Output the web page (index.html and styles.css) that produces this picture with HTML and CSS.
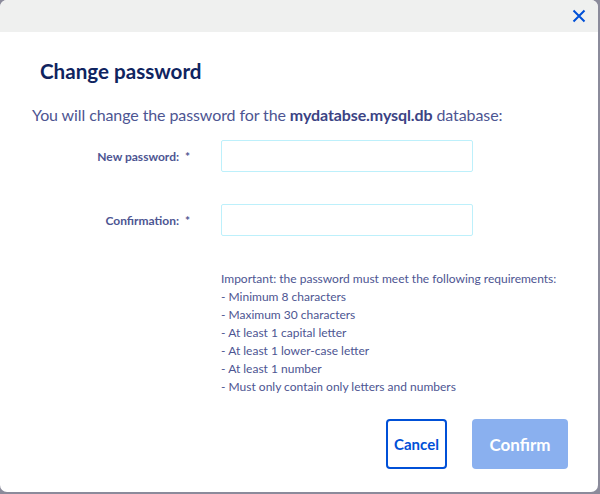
FILE: index.html
```html
<!DOCTYPE html>
<html>
<head>
<meta charset="utf-8">
<link rel="stylesheet" href="styles.css">
</head>
<body>
<div class="modal">
  <div class="header">
    <button class="close" aria-label="Close">
      <svg width="14" height="14" viewBox="0 0 14 14"><path d="M1.5 1.5L12.5 12.5M12.5 1.5L1.5 12.5" stroke="#0050d7" stroke-width="2" fill="none"/></svg>
    </button>
  </div>
  <div class="body">
    <h1 class="title">Change password</h1>
    <p class="intro">You will change the password for the <b>mydatabse.mysql.db</b> database:</p>
    <div class="form">
      <label class="label">New password:&nbsp; *</label>
      <input class="input" type="password">
      <label class="label">Confirmation:&nbsp; *</label>
      <input class="input" type="password">
      <div></div>
      <div class="req">
        <div>Important: the password must meet the following requirements:</div>
        <div>- Minimum 8 characters</div>
        <div>- Maximum 30 characters</div>
        <div>- At least 1 capital letter</div>
        <div>- At least 1 lower-case letter</div>
        <div>- At least 1 number</div>
        <div>- Must only contain only letters and numbers</div>
      </div>
    </div>
    <div class="actions">
      <button class="btn cancel">Cancel</button>
      <button class="btn confirm">Confirm</button>
    </div>
  </div>
</div>
</body>
</html>
```
FILE: styles.css
```css
html, body {
  margin: 0;
  padding: 0;
  background: #8b8b9b;
  width: 600px;
  height: 494px;
  overflow: hidden;
}
body {
  font-family: "Source Sans Pro", "Lato", "Noto Sans", sans-serif;
}
.modal {
  width: 598px;
  height: 492px;
  background: #fff;
  border-radius: 7px;
  overflow: hidden;
}
.header {
  height: 32px;
  background: #eff0ef;
  display: flex;
  justify-content: flex-end;
  align-items: center;
  padding-right: 12px;
}
.close {
  border: 0;
  background: none;
  padding: 0;
  width: 14px;
  height: 14px;
  display: flex;
}
.body {
  padding: 0 0 0 32px;
}
.title {
  margin: 26px 0 0 8px;
  font-size: 20.6px;
  font-weight: 700;
  color: #0f2460;
  line-height: 26px;
}
.intro {
  margin: 21px 0 0 0;
  font-size: 16px;
  line-height: 20px;
  color: #4d5592;
  letter-spacing: -0.1px;
}
.intro b {
  color: #3b4384;
}
.form {
  display: grid;
  grid-template-columns: 158px 252px;
  column-gap: 31px;
  row-gap: 32px;
  margin-top: 15px;
  align-items: center;
}
.label {
  text-align: right;
  font-size: 12px;
  font-weight: 700;
  color: #4d5592;
}
.input {
  box-sizing: border-box;
  width: 252px;
  height: 32px;
  border: 1px solid #bdf0fb;
  border-radius: 2px;
  margin: 0;
  outline: none;
}
.req {
  font-size: 12px;
  line-height: 18px;
  color: #4d5592;
  margin-top: 2px;
  white-space: nowrap;
}
.actions {
  display: flex;
  justify-content: flex-end;
  gap: 25px;
  margin-top: 23px;
  padding-right: 30px;
}
.btn {
  height: 50px;
  border-radius: 4px;
  font-family: inherit;
  font-weight: 700;
  cursor: pointer;
}
.cancel {
  width: 61px;
  background: #fff;
  border: 2px solid #0050d7;
  color: #0050d7;
  font-size: 15px;
  padding: 0;
}
.confirm {
  width: 96px;
  background: #8ab0ef;
  border: 0;
  color: #fff;
  font-size: 17px;
}
```
